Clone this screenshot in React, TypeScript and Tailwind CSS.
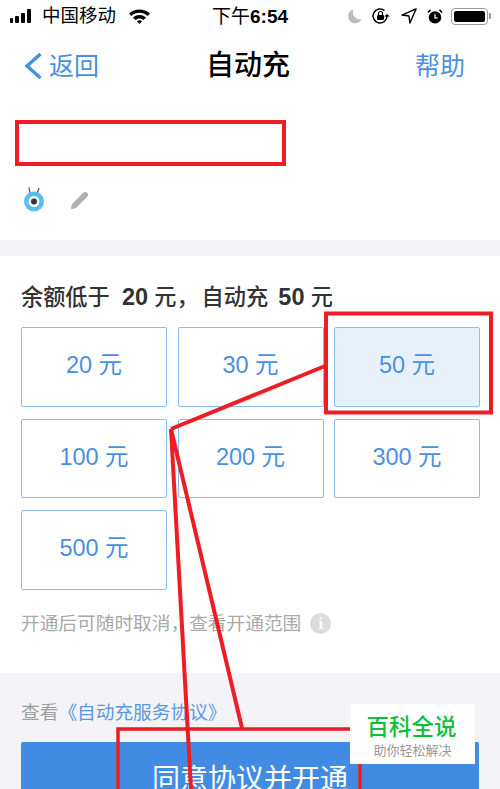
import { Pencil } from 'lucide-react'

const amounts = ['20 元', '30 元', '50 元', '100 元', '200 元', '300 元', '500 元']

function StatusBar() {
  return (
    <div className="flex items-center h-[32px] pl-[10px] text-black">
      <div className="flex items-end gap-[2px] w-[25px] h-[14px] shrink-0">
        <div className="w-[3px] h-[5px] rounded-[1px] bg-black" />
        <div className="w-[4px] h-[7px] rounded-[1px] bg-black" />
        <div className="w-[4px] h-[10px] rounded-[1px] bg-black" />
        <div className="w-[4px] h-[14px] rounded-[1px] bg-black" />
      </div>
      <span className="ml-[7px] w-[75px] text-[18.500px] leading-none">中国移动</span>
      <svg className="ml-[11px] shrink-0" width="23" height="16" viewBox="0 0 23 16">
        <path d="M1 5.500C7 0 16 0 22 5.500L19.600 8C15 3.800 8 3.800 3.400 8Z" fill="#000" />
        <path d="M5 9.500C8.800 6.200 14.200 6.200 18 9.500L15.600 12C13 9.900 10 9.900 7.400 12Z" fill="#000" />
        <path d="M9 13.300C10.500 12 12.500 12 14 13.300L11.500 16Z" fill="#000" />
      </svg>
      <span className="ml-[61px] w-[85px] text-[19px] leading-none whitespace-nowrap">
        下午<span className="font-bold">6:54</span>
      </span>
      <svg className="ml-[50px] shrink-0" width="16" height="16" viewBox="0 0 17 17">
        <path d="M7 1.500A7.500 7.500 0 1 0 15.500 12 7.500 7.500 0 0 1 7 1.500Z" fill="#bdbdbd" />
      </svg>
      <svg className="ml-[8px] shrink-0" width="20" height="18" viewBox="0 0 20 18">
        <path d="M16 9A7 7 0 1 1 13.500 3.600" fill="none" stroke="#000" strokeWidth="1.500" />
        <path d="M16 7l3 2.500h-6z" fill="#000" />
        <rect x="6" y="8" width="7" height="5" rx="1" fill="#000" />
        <path d="M7.500 8V6.500a2 2 0 0 1 4 0V8" fill="none" stroke="#000" strokeWidth="1.200" />
      </svg>
      <svg className="ml-[10px] shrink-0" width="16" height="16" viewBox="0 0 17 17">
        <path d="M16 1L1 7.500l7.500 1 1 7.500Z" fill="none" stroke="#000" strokeWidth="1.500" strokeLinejoin="round" />
      </svg>
      <svg className="ml-[10px] shrink-0" width="16" height="17" viewBox="0 0 18 18">
        <circle cx="9" cy="10" r="7" fill="#000" />
        <path d="M9 6v4.500h3" fill="none" stroke="#fff" strokeWidth="1.300" />
        <path d="M1 4.500L4 1.500M17 4.500L14 1.500" stroke="#000" strokeWidth="1.800" />
      </svg>
      <div className="ml-[8px] w-[37px] h-[17px] shrink-0 rounded-[4px] border border-[#9a9a9a] p-[2px]">
        <div className="w-full h-full rounded-[2px] bg-black" />
      </div>
      <div className="ml-[1px] w-[2px] h-[6px] shrink-0 rounded-r-[1px] bg-[#9a9a9a]" />
    </div>
  )
}

function NavBar() {
  return (
    <div className="flex items-center justify-between h-[68px] pl-[23px] pr-[35px]">
      <div className="flex items-center w-[124px] text-[#4a90e2] text-[25px] leading-none">
        <svg width="20" height="28" viewBox="0 0 20 28">
          <path d="M17.500 2L4 14l13.500 12" fill="none" stroke="#4a90e2" strokeWidth="3.500" />
        </svg>
        <span className="ml-[6px]">返回</span>
      </div>
      <div className="text-[28px] leading-none font-medium text-black">自动充</div>
      <div className="w-[116px] text-right text-[#4a90e2] text-[25px] leading-none">帮助</div>
    </div>
  )
}

function Annotations() {
  return (
    <svg className="absolute inset-0" width="500" height="789" viewBox="0 0 500 789" fill="none" stroke="#ee1c25" strokeWidth="4">
      <rect x="17" y="122" width="267" height="42" />
      <rect x="326" y="313.500" width="165" height="99" />
      <path d="M325 366L171 429" />
      <path d="M171 429L191 789" />
      <path d="M171 429L242 728" />
      <path d="M360 789V729H118V789" strokeWidth="3.500" />
    </svg>
  )
}

export default function App() {
  return (
    <div className="relative w-[500px] h-[789px] overflow-hidden bg-white font-['Liberation_Sans','Noto_Sans_CJK_SC',sans-serif]">
      <StatusBar />
      <NavBar />

      <div className="h-[140px] pt-[86px] pl-[23px]">
        <div className="flex items-center">
          <svg width="22" height="26" viewBox="0 0 22 26">
            <path d="M7 8L6 1.500M14 8L16 2" stroke="#555" strokeWidth="1.300" />
            <circle cx="11" cy="15.500" r="10" fill="#56bdf5" />
            <circle cx="11" cy="15.500" r="5.500" fill="#fff" />
            <circle cx="11" cy="15.500" r="3" fill="#333" />
          </svg>
          <Pencil className="ml-[25px] mt-[2px] text-[#b0b0b0] fill-[#b0b0b0]" size={19} strokeWidth={1.5} />
        </div>
      </div>

      <div className="h-[16px] bg-[#f3f3f8]" />

      <div className="h-[417px] px-[21px] pt-[27px]">
        <div className="h-[28px] text-[22.200px] leading-[28px] font-medium text-[#333] whitespace-nowrap">
          余额低于 <span className="ml-[6px] font-bold text-[23.500px]">20</span> 元，
          <span className="ml-[3px]">自动充</span> <span className="ml-[4px] font-bold text-[23.500px]">50</span> 元
        </div>
        <div className="grid grid-cols-3 gap-x-[10.500px] gap-y-[12px] mt-[16px] mr-[-1px]">
          {amounts.map((a) => (
            <div
              key={a}
              className={`flex items-center justify-center h-[79.500px] rounded-[2px] border border-[#8dbdf0] text-[23.500px] leading-none pb-[2px] text-[#4a90e2] ${a === '50 元' ? 'bg-[#e8f1fa]' : 'bg-white'}`}
            >
              {a}
            </div>
          ))}
        </div>
        <div className="flex items-center mt-[20px] text-[18.700px] leading-[28px] text-[#a9a9a9]">
          <span>开通后可随时取消，查看开通范围</span>
          <span className="flex items-center justify-center ml-[9px] w-[21px] h-[21px] rounded-full bg-[#dcdcdc] text-white text-[17px] font-bold font-['Liberation_Serif',serif]">i</span>
        </div>
      </div>

      <div className="h-[116px] bg-[#f3f3f8] px-[21px] pt-[26px]">
        <div className="text-[18.700px] leading-[28px] text-[#a0a0a0]">
          查看<span className="text-[#5b97e0]">《自动充服务协议》</span>
        </div>
        <div className="flex items-start justify-center mt-[15px] h-[80px] rounded-[2px] bg-[#428be3] text-white text-[28px] leading-none pt-[24px]">
          同意协议并开通
        </div>
      </div>

      <Annotations />

      <div className="absolute left-[350px] top-[704px] flex flex-col items-center w-[125px] h-[60px] bg-white pt-[10px]">
        <div className="text-[22.500px] leading-[28px] font-medium text-[#0fbf3a] ml-[-2px]">百科全说</div>
        <div className="text-[13px] leading-[17px] text-[#999]">助你轻松解决</div>
      </div>
    </div>
  )
}
